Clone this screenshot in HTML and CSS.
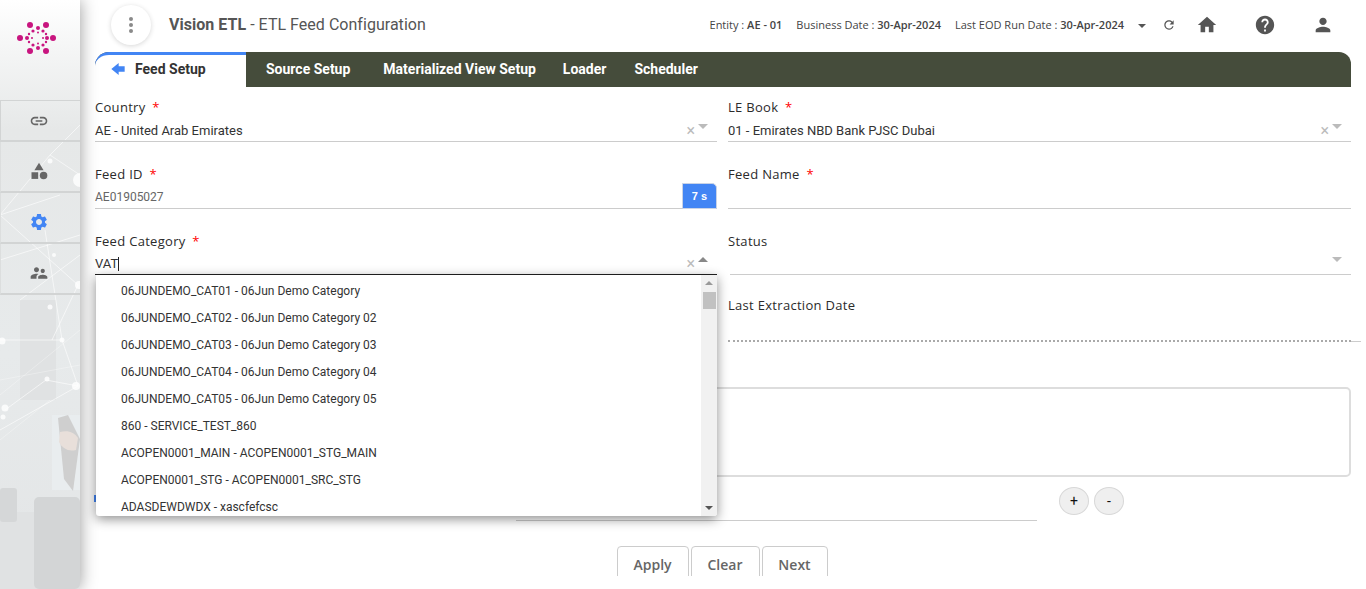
FILE: index.html
```html
<!DOCTYPE html>
<html lang="en">
<head>
    <meta charset="UTF-8">
    <title>Vision ETL - ETL Feed Configuration</title>
    <link rel="stylesheet" href="styles.css">
</head>
<body>
    <div class="page">
        <aside class="sidebar">
            <svg class="sidebar-art" viewBox="0 0 80 589" aria-hidden="true">
                <rect x="20" y="300" width="36" height="100" fill="#e0e2e3"/>
                <rect x="52" y="415" width="28" height="75" fill="#e9edef"/>
                <path d="M58 418l10-3 12 24-7 52-9-12z" fill="#cfcfcf"/>
                <path d="M60 432c8-2 14 0 18 6l-2 12c-8 2-14-2-17-8z" fill="#e8dfda"/>
                <rect x="0" y="512" width="80" height="77" fill="#e0e2e3"/>
                <rect x="0" y="488" width="17" height="34" rx="3" fill="#d5d7d8"/>
                <rect x="34" y="497" width="46" height="92" rx="5" fill="#d3d5d6"/>
                <g stroke="#ffffff" stroke-opacity=".6" fill="none">
                    <path d="M50 155L0 215 78 285 52 340M80 175L50 155 80 125M0 215L60 195M0 340L62 340 78 386 46 380 5 410M62 340L45 230M0 260L80 235M0 430L78 386M20 300L80 255"/>
                    <path d="M0 395L80 330M0 380L80 365M0 440L50 400" stroke-opacity=".3"/>
                </g>
                <g fill="#ffffff" fill-opacity=".8">
                    <circle cx="50" cy="161" r="2.5"/>
                    <circle cx="80" cy="180" r="7"/>
                    <circle cx="54" cy="255" r="2"/>
                    <circle cx="79" cy="285" r="4"/>
                    <circle cx="50" cy="307" r="2.5"/>
                    <circle cx="2" cy="341" r="3.5"/>
                    <circle cx="62" cy="340" r="2.5"/>
                    <circle cx="47" cy="379" r="2.5"/>
                    <circle cx="76" cy="386" r="4"/>
                    <circle cx="5" cy="408" r="3.5"/>
                    <circle cx="3" cy="417" r="2.5"/>
                </g>
            </svg>
            <div class="logo">
                <svg width="48" height="48" viewBox="0 0 48 48" aria-hidden="true">
                    <g fill="#c8157f">
                        <circle cx="16" cy="9" r="3"/>
                        <circle cx="32" cy="9" r="3"/>
                        <circle cx="6" cy="22" r="3"/>
                        <circle cx="39" cy="22" r="3"/>
                        <circle cx="16" cy="35" r="3"/>
                        <circle cx="32" cy="35" r="3"/>
                        <circle cx="24" cy="12" r="2"/>
                        <circle cx="24" cy="32" r="2"/>
                        <circle cx="13" cy="22" r="2"/>
                        <circle cx="33" cy="22" r="2"/>
                        <circle cx="19" cy="15" r="1.6"/>
                        <circle cx="29" cy="15" r="1.6"/>
                        <circle cx="19" cy="29" r="1.6"/>
                        <circle cx="29" cy="29" r="1.6"/>
                        <circle cx="15" cy="18" r="1.2"/>
                        <circle cx="32" cy="18" r="1.2"/>
                        <circle cx="15" cy="26" r="1.2"/>
                        <circle cx="32" cy="26" r="1.2"/>
                        <circle cx="24" cy="16.500" r="1"/>
                        <circle cx="24" cy="27.500" r="1"/>
                        <circle cx="18" cy="22" r="1"/>
                        <circle cx="29" cy="22" r="1"/>
                    </g>
                </svg>
            </div>
            <nav class="side-nav">
                <a class="side-item side-item-first">
                    <svg width="20" height="20" viewBox="0 0 24 24"><path d="M3.9 12c0-1.71 1.39-3.1 3.1-3.1h4V7H7c-2.76 0-5 2.24-5 5s2.24 5 5 5h4v-1.9H7c-1.71 0-3.1-1.39-3.1-3.1zM8 13h8v-2H8v2zm9-6h-4v1.9h4c1.71 0 3.1 1.39 3.1 3.1s-1.39 3.1-3.1 3.1h-4V17h4c2.76 0 5-2.24 5-5s-2.24-5-5-5z"/></svg>
                </a>
                <a class="side-item">
                    <svg width="20" height="20" viewBox="0 0 24 24"><path d="M12 2l-5.5 9h11z"/><circle cx="17.5" cy="17.5" r="4.5"/><rect x="3" y="13.5" width="8" height="8"/></svg>
                </a>
                <a class="side-item side-item-active">
                    <svg width="20" height="20" viewBox="0 0 24 24"><path d="M19.14 12.94c.04-.3.06-.61.06-.94 0-.32-.02-.64-.07-.94l2.03-1.58c.18-.14.23-.41.12-.61l-1.92-3.32c-.12-.22-.37-.29-.59-.22l-2.39.96c-.5-.38-1.03-.7-1.62-.94l-.36-2.54c-.04-.24-.24-.41-.48-.41h-3.84c-.24 0-.43.17-.47.41l-.36 2.54c-.59.24-1.13.57-1.62.94l-2.39-.96c-.22-.08-.47 0-.59.22L2.74 8.87c-.12.21-.08.47.12.61l2.03 1.58c-.05.3-.09.63-.09.94s.02.64.07.94l-2.03 1.58c-.18.14-.23.41-.12.61l1.92 3.32c.12.22.37.29.59.22l2.39-.96c.5.38 1.03.7 1.62.94l.36 2.54c.05.24.24.41.48.41h3.84c.24 0 .44-.17.47-.41l.36-2.54c.59-.24 1.13-.56 1.62-.94l2.39.96c.22.08.47 0 .59-.22l1.92-3.32c.12-.22.07-.47-.12-.61l-2.01-1.58zM12 15.6c-1.98 0-3.6-1.62-3.6-3.6s1.62-3.6 3.6-3.6 3.6 1.62 3.6 3.6-1.62 3.6-3.6 3.6z"/></svg>
                </a>
                <a class="side-item">
                    <svg width="20" height="20" viewBox="0 0 24 24"><path d="M16.5 12c1.38 0 2.49-1.12 2.49-2.5S17.88 7 16.5 7C15.12 7 14 8.12 14 9.5s1.12 2.5 2.5 2.5zM9 11c1.66 0 3-1.34 3-3s-1.34-3-3-3-3 1.34-3 3 1.34 3 3 3zm7.5 3c-1.83 0-5.500.92-5.500 2.750V19h11v-2.250c0-1.830-3.670-2.750-5.500-2.750zM9 13c-2.330 0-7 1.170-7 3.500V19h7v-2.250c0-.85.33-2.340 2.370-3.470C10.500 13.100 9.660 13 9 13z"/></svg>
                </a>
            </nav>
        </aside>

        <main class="main">
            <header class="topbar">
                <button class="kebab" aria-label="Menu"><span></span><span></span><span></span></button>
                <div class="app-title"><b>Vision ETL</b> - ETL Feed Configuration</div>
                <div class="top-info">
                    <span>Entity : <b>AE - 01</b></span>
                    <span>Business Date : <b>30-Apr-2024</b></span>
                    <span>Last EOD Run Date : <b>30-Apr-2024</b></span>
                </div>
                <i class="caret caret-info"></i>
                <svg class="top-refresh" width="14" height="14" viewBox="0 0 24 24"><path d="M17.65 6.35C16.2 4.9 14.21 4 12 4c-4.42 0-7.99 3.58-7.99 8s3.57 8 7.99 8c3.73 0 6.84-2.55 7.73-6h-2.08c-.82 2.33-3.04 4-5.65 4-3.31 0-6-2.69-6-6s2.69-6 6-6c1.66 0 3.14.69 4.22 1.78L13 11h7V4l-2.35 2.35z"/></svg>
                <svg class="top-icon" width="22" height="22" viewBox="0 0 24 24"><path d="M10 20v-6h4v6h5v-8h3L12 3 2 12h3v8z"/></svg>
                <svg class="top-icon" width="22" height="22" viewBox="0 0 24 24"><path d="M12 2C6.48 2 2 6.48 2 12s4.48 10 10 10 10-4.48 10-10S17.52 2 12 2zm1 17h-2v-2h2v2zm2.07-7.75l-.9.92C13.45 12.9 13 13.5 13 15h-2v-.5c0-1.1.45-2.1 1.17-2.83l1.24-1.26c.37-.36.59-.86.59-1.41 0-1.1-.9-2-2-2s-2 .9-2 2H8c0-2.21 1.79-4 4-4s4 1.79 4 4c0 .88-.36 1.68-.93 2.25z"/></svg>
                <svg class="top-icon" width="22" height="22" viewBox="0 0 24 24"><path d="M12 12c2.21 0 4-1.79 4-4s-1.79-4-4-4-4 1.79-4 4 1.79 4 4 4zm0 2c-2.67 0-8 1.34-8 4v2h16v-2c0-2.66-5.33-4-8-4z"/></svg>
            </header>

            <div class="tabs">
                <a class="tab tab-active">
                    <svg width="16" height="16" viewBox="0 0 24 24"><path d="M22 8h-9V3L2 12l11 9v-5h9z"/></svg>
                    Feed Setup
                </a>
                <a class="tab tab-source">Source Setup</a>
                <a class="tab tab-view">Materialized View Setup</a>
                <a class="tab tab-loader">Loader</a>
                <a class="tab tab-scheduler">Scheduler</a>
            </div>

            <div class="content">
                <div class="form-grid">
                    <div class="field">
                        <label>Country <em>*</em></label>
                        <div class="value">AE - United Arab Emirates<i class="clear">×</i><i class="caret"></i></div>
                    </div>
                    <div class="field">
                        <label>LE Book <em>*</em></label>
                        <div class="value">01 - Emirates NBD Bank PJSC Dubai<i class="clear">×</i><i class="caret"></i></div>
                    </div>
                    <div class="field">
                        <label>Feed ID <em>*</em></label>
                        <div class="value value-muted">AE01905027<span class="timer">7 s</span></div>
                    </div>
                    <div class="field">
                        <label>Feed Name <em>*</em></label>
                        <div class="value"></div>
                    </div>
                    <div class="field field-tight field-open">
                        <label>Feed Category <em>*</em></label>
                        <div class="value value-focus">VAT<span class="cursor"></span><i class="clear">×</i><i class="caret caret-up"></i></div>
                        <div class="dropdown">
                            <ul class="dropdown-list">
                                <li>06JUNDEMO_CAT01 - 06Jun Demo Category</li>
                                <li>06JUNDEMO_CAT02 - 06Jun Demo Category 02</li>
                                <li>06JUNDEMO_CAT03 - 06Jun Demo Category 03</li>
                                <li>06JUNDEMO_CAT04 - 06Jun Demo Category 04</li>
                                <li>06JUNDEMO_CAT05 - 06Jun Demo Category 05</li>
                                <li>860 - SERVICE_TEST_860</li>
                                <li>ACOPEN0001_MAIN - ACOPEN0001_STG_MAIN</li>
                                <li>ACOPEN0001_STG - ACOPEN0001_SRC_STG</li>
                                <li>ADASDEWDWDX - xascfefcsc</li>
                            </ul>
                            <div class="scrollbar">
                                <i class="scroll-up"></i>
                                <i class="scroll-thumb"></i>
                                <i class="scroll-down"></i>
                            </div>
                        </div>
                    </div>
                    <div class="field field-tight field-status">
                        <label>Status</label>
                        <div class="value"><i class="caret"></i></div>
                    </div>
                    <div class="field field-date"></div>
                    <div class="field field-date">
                        <label>Last Extraction Date</label>
                        <div class="date-line"><span class="dots"></span><span class="solid"></span></div>
                    </div>
                </div>

                <div class="notes"></div>

                <div class="key-row">
                    <span class="radio-edge"></span>
                    <span class="key-input"></span>
                    <button class="round-btn">+</button>
                    <button class="round-btn">-</button>
                </div>

                <div class="actions">
                    <button class="action-btn btn-apply">Apply</button>
                    <button class="action-btn btn-clear">Clear</button>
                    <button class="action-btn btn-next">Next</button>
                </div>
            </div>
        </main>
    </div>
</body>
</html>
```

FILE: styles.css
```css
* {
    box-sizing: border-box;
}

html, body {
    margin: 0;
    padding: 0;
    height: 100%;
    background: #fff;
    overflow: hidden;
}

body {
    font-family: Roboto, "Liberation Sans", sans-serif;
    color: #333;
}

.page {
    display: flex;
    height: 589px;
}

/* sidebar */
.sidebar {
    position: relative;
    width: 80px;
    flex: none;
    background: linear-gradient(180deg, #ffffff 0%, #f5f6f6 8%, #e6e8e8 22%, #e7eaeb 60%, #e3e5e6 100%);
    box-shadow: 0 0 16px rgba(0, 0, 0, 0.4);
    z-index: 2;
}

.sidebar-art {
    position: absolute;
    left: 0;
    top: 0;
    width: 80px;
    height: 589px;
}

.logo {
    position: relative;
    height: 100px;
    padding: 16px 0 0 14px;
}

.side-nav {
    position: relative;
}

.side-item {
    display: flex;
    align-items: center;
    justify-content: center;
    height: 51px;
    border-left: 1px solid #dcdede;
    border-bottom: 2px solid #d2d4d4;
    padding: 8px 3px 0 0;
}

.side-item svg {
    fill: #666;
}

.side-item-first {
    height: 42px;
    border-top: 1px solid #d2d4d4;
    border-left: 1px solid #d2d4d4;
    padding: 0 3px 0 0;
}

.side-item-active svg {
    fill: #4285f4;
}

/* header */
.main {
    flex: 1;
    min-width: 0;
    padding: 0 15px;
    display: flex;
    flex-direction: column;
}

.topbar {
    display: flex;
    align-items: center;
    height: 52px;
    padding-bottom: 3px;
}

.kebab {
    width: 40px;
    height: 40px;
    margin: 0 18px 0 16px;
    border: none;
    border-radius: 50%;
    background: #fff;
    box-shadow: 0 1px 5px rgba(0, 0, 0, 0.16);
    display: flex;
    flex-direction: column;
    align-items: center;
    justify-content: center;
    gap: 2px;
    padding: 0;
}

.kebab span {
    width: 4px;
    height: 4px;
    border-radius: 50%;
    background: #8a8a8a;
}

.app-title {
    font-size: 16px;
    letter-spacing: 0.03px;
    color: #555;
}

.app-title b {
    font-weight: 700;
}

.top-info {
    margin-left: auto;
    display: flex;
    gap: 14px;
    font-family: "Open Sans", sans-serif;
    font-size: 11px;
    color: #444;
}

.top-info b {
    font-weight: 600;
}

.caret-info {
    margin: 2px 0 0 14px;
}

.top-refresh {
    margin-left: 16px;
    fill: #555;
}

.top-icon {
    fill: #555;
    margin-left: 36px;
}

.top-refresh + .top-icon {
    margin-left: 20px;
}

.top-icon:last-child {
    margin-right: 17px;
}

/* tabs */
.tabs {
    display: flex;
    height: 35px;
    flex: none;
    background: #454c3b;
    border-radius: 14px 12px 0 0;
}

.tab {
    display: flex;
    align-items: center;
    padding-bottom: 2px;
    font-size: 14px;
    font-weight: 700;
    color: #fff;
    white-space: nowrap;
}

.tab-source {
    margin-left: 20px;
}

.tab-view {
    margin-left: 33px;
}

.tab-loader {
    margin-left: 27px;
}

.tab-scheduler {
    margin-left: 28px;
}

.tab-active {
    width: 151px;
    gap: 9px;
    padding: 0 0 5px 15px;
    color: #333;
    background: #fff;
    border-top: 3px solid #4285f4;
    border-radius: 14px 0 0 0;
}

.tab-active svg {
    fill: #4285f4;
}

/* form, cut off just above the window edge */
.content {
    height: 489px;
    clip-path: inset(0 -20px 0 -20px);
    padding-top: 10px;
    position: relative;
}

.form-grid {
    display: grid;
    grid-template-columns: 622px 623px;
    column-gap: 11px;
}

.field {
    position: relative;
    height: 67px;
}

.field-tight {
    height: 64px;
}

.field-tight label {
    margin-bottom: 2px;
}

.field-status .value {
    margin-left: 2px;
}

.field-date {
    height: 47px;
}

label {
    display: block;
    height: 20px;
    margin-bottom: 3px;
    font-family: "Open Sans", sans-serif;
    font-size: 13px;
    font-weight: 500;
    line-height: 20px;
    color: #2b2b2b;
    letter-spacing: 0.3px;
}

label em {
    color: #f00;
    font-style: normal;
    margin-left: 3px;
}

.value {
    position: relative;
    display: flex;
    align-items: center;
    height: 22px;
    font-size: 13px;
    color: #333;
    border-bottom: 1px solid #ccc;
}

.value-muted {
    font-size: 12px;
    color: #666;
    padding-bottom: 2px;
}

.value-focus {
    border-bottom-color: #222;
}

.cursor {
    width: 1px;
    height: 14px;
    background: #222;
}

.clear {
    position: absolute;
    right: 22px;
    top: 1px;
    font-style: normal;
    font-size: 16px;
    color: #bbb;
}

.caret {
    display: block;
    width: 0;
    height: 0;
    border-left: 5px solid transparent;
    border-right: 5px solid transparent;
    border-top: 5px solid #bbb;
}

.value .caret {
    position: absolute;
    right: 9px;
    top: 4px;
}

.caret-info {
    border-top-color: #555;
    border-left-width: 4px;
    border-right-width: 4px;
    border-top-width: 4px;
}

.value .caret-up {
    border-top: none;
    border-bottom: 5px solid #888;
}

.timer {
    position: absolute;
    right: 0;
    bottom: -1px;
    width: 35px;
    height: 26px;
    display: flex;
    align-items: center;
    justify-content: center;
    font-family: "Liberation Sans", sans-serif;
    font-size: 11px;
    font-weight: 700;
    color: #fff;
    background: #4285f4;
    border: 1px solid #c9d3e6;
    border-radius: 0 5px 0 0;
}

/* open list */
.dropdown {
    position: absolute;
    top: 100%;
    left: 1px;
    width: 621px;
    height: 241px;
    margin-top: -20px;
    display: flex;
    background: #fff;
    box-shadow: 0 3px 12px rgba(0, 0, 0, 0.45);
    border-radius: 0 0 3px 3px;
    overflow: hidden;
    z-index: 5;
}

.dropdown-list {
    flex: 1;
    margin: 0;
    padding: 3px 0 0 25px;
    list-style: none;
    overflow: hidden;
}

.dropdown-list li {
    height: 27px;
    line-height: 27px;
    font-size: 12px;
    color: #333;
    white-space: nowrap;
}

.scrollbar {
    position: relative;
    width: 16px;
    background: #f1f1f1;
}

.scroll-up, .scroll-down {
    position: absolute;
    left: 4px;
    width: 0;
    height: 0;
    border-left: 4px solid transparent;
    border-right: 4px solid transparent;
}

.scroll-up {
    top: 6px;
    border-bottom: 4px solid #999;
}

.scroll-down {
    bottom: 6px;
    border-top: 4px solid #555;
}

.scroll-thumb {
    position: absolute;
    left: 2px;
    top: 17px;
    width: 13px;
    height: 17px;
    background: #c1c1c1;
}

.date-line {
    display: flex;
    align-items: flex-end;
    height: 24px;
    margin-right: -10px;
}

.dots {
    flex: 1;
    border-bottom: 2px dotted #aaa;
}

.solid {
    width: 10px;
    border-bottom: 1px solid #ccc;
}

.notes {
    height: 90px;
    margin: 45px 0 0 4px;
    border: 2px solid #ddd;
    border-radius: 5px;
}

.key-row {
    position: relative;
    display: flex;
    align-items: flex-start;
    height: 44px;
    padding: 10px 0 0 421px;
}

.radio-edge {
    position: absolute;
    left: -1px;
    top: 18px;
    width: 2px;
    height: 7px;
    background: #4285f4;
}

.key-input {
    width: 521px;
    height: 34px;
    margin-right: 22px;
    border-bottom: 1px solid #ccc;
}

.round-btn {
    width: 30px;
    height: 28px;
    margin-right: 5px;
    padding: 0;
    border: 1px solid #d8d8d8;
    border-radius: 50%;
    background: #efefef;
    font-family: Roboto, sans-serif;
    font-size: 14px;
    color: #111;
}

.actions {
    display: flex;
    justify-content: center;
    gap: 2px;
    margin-top: 25px;
    padding-right: 2px;
}

.action-btn {
    height: 40px;
    padding: 0 0 4px;
    border: 1px solid #ccc;
    border-radius: 4px;
    background: #fff;
    font-family: "Open Sans", sans-serif;
    font-size: 14px;
    font-weight: 600;
    color: #666;
}

.btn-apply { width: 72px; }
.btn-clear { width: 69px; }
.btn-next { width: 66px; }
```
